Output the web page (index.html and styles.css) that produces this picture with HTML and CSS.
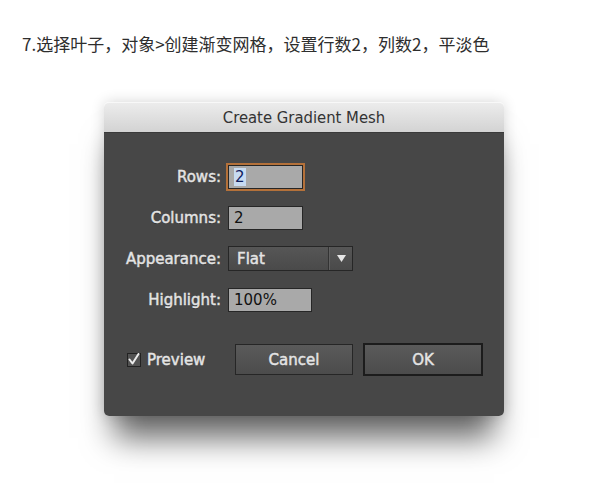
FILE: index.html
```html
<!DOCTYPE html>
<html lang="zh">
<head>
<meta charset="utf-8">
<title>Create Gradient Mesh</title>
<link rel="stylesheet" href="styles.css">
</head>
<body>
<p class="step">7.选择叶子，对象&gt;创建渐变网格，设置行数2，列数2，平淡色</p>
<div class="dialog">
  <div class="titlebar">Create Gradient Mesh</div>
  <div class="body">
    <div class="form">
      <label class="lbl">Rows:</label>
      <div class="field focus"><span class="sel">2</span></div>
      <label class="lbl">Columns:</label>
      <div class="field">2</div>
      <label class="lbl">Appearance:</label>
      <div class="select">
        <span class="sel-text">Flat</span>
        <span class="sel-div"></span>
        <span class="sel-arrow"><svg width="9" height="7" viewBox="0 0 9 7"><path d="M0 0 H9 L4.5 7 Z" fill="#e6e6e6"/></svg></span>
      </div>
      <label class="lbl">Highlight:</label>
      <div class="field wide">100%</div>
    </div>
    <div class="footer">
      <div class="preview">
        <span class="check"><svg width="14" height="14" viewBox="0 0 14 14"><path d="M2.5 6.5 L5.5 10.5 L11.5 1" fill="none" stroke="#ececec" stroke-width="2" stroke-linecap="round" stroke-linejoin="round"/></svg></span>
        <span class="preview-text">Preview</span>
      </div>
      <div class="btn">Cancel</div>
      <div class="btn default">OK</div>
    </div>
  </div>
</div>
</body>
</html>
```
FILE: styles.css
```css
html, body {
  margin: 0;
  padding: 0;
  background: #ffffff;
}
body {
  width: 600px;
  height: 487px;
  overflow: hidden;
}
.step {
  margin: 0;
  padding: 34px 0 0 22px;
  font-family: "Noto Sans CJK SC", "DejaVu Sans", sans-serif;
  font-size: 17px;
  line-height: 20px;
  color: #2e2e2e;
  white-space: nowrap;
}
.dialog {
  margin: 48px 0 0 104px;
  width: 400px;
  border-radius: 5px;
  box-shadow: 0 32px 30px -10px rgba(0,0,0,0.6), 0 0 14px rgba(0,0,0,0.16);
  font-family: "DejaVu Sans", sans-serif;
}
.titlebar {
  height: 31px;
  box-sizing: border-box;
  border-radius: 5px 5px 0 0;
  background: linear-gradient(#ececec, #d3d3d3);
  border-top: 1px solid #f8f8f8;
  border-bottom: 1px solid #3a3a3a;
  text-align: center;
  font-family: "DejaVu Sans Condensed", "DejaVu Sans", sans-serif;
  font-stretch: condensed;
  font-size: 16.5px;
  line-height: 29px;
  color: #333333;
}
.body {
  height: 283px;
  box-sizing: border-box;
  background: #474747;
  border-radius: 0 0 5px 5px;
  padding: 23px 21px 0 23px;
}
.form {
  display: grid;
  grid-template-columns: 94px auto;
  grid-auto-rows: 41px;
  column-gap: 7px;
  align-items: center;
  justify-items: start;
}
.lbl,
.sel-text,
.preview-text,
.btn {
  font-size: 15px;
  color: #e4e4e4;
  -webkit-text-stroke: 0.45px #e4e4e4;
}
.lbl {
  justify-self: end;
  text-shadow: 0 1px 0 rgba(0,0,0,0.3);
}
.field {
  width: 75px;
  height: 24px;
  box-sizing: border-box;
  background: #a9a9a9;
  border: 1px solid #262626;
  padding-left: 5px;
  font-size: 15px;
  line-height: 22px;
  color: #111111;
}
.field.wide {
  width: 84px;
}
.field.focus {
  box-shadow: 0 0 0 2px #b4713a;
}
.sel {
  background: #c8dbf2;
  color: #102060;
  padding: 0 1px;
}
.select {
  width: 125px;
  height: 25px;
  box-sizing: border-box;
  border: 1px solid #262626;
  background: linear-gradient(#565656, #4a4a4a);
  display: flex;
  align-items: center;
}
.sel-text {
  flex: 1;
  padding-left: 8px;
}
.sel-div {
  width: 1px;
  height: 100%;
  background: #333333;
  border-right: 1px solid #606060;
}
.sel-arrow {
  width: 22px;
  display: flex;
  justify-content: center;
  align-items: center;
}
.footer {
  margin-top: 23px;
  display: flex;
  align-items: center;
}
.preview {
  width: 108px;
  display: flex;
  align-items: center;
  gap: 6px;
}
.check {
  width: 14px;
  height: 14px;
  box-sizing: border-box;
  border: 1px solid #222222;
  background: #525252;
  display: flex;
  align-items: center;
  justify-content: center;
}
.check svg {
  flex: none;
}
.btn {
  width: 118px;
  height: 31px;
  box-sizing: border-box;
  border: 1px solid #262626;
  background: linear-gradient(#5a5a5a, #4c4c4c);
  display: flex;
  align-items: center;
  justify-content: center;
}
.btn.default {
  margin-left: 10px;
  width: 120px;
  height: 33px;
  border: 2px solid #1c1c1c;
}
```
